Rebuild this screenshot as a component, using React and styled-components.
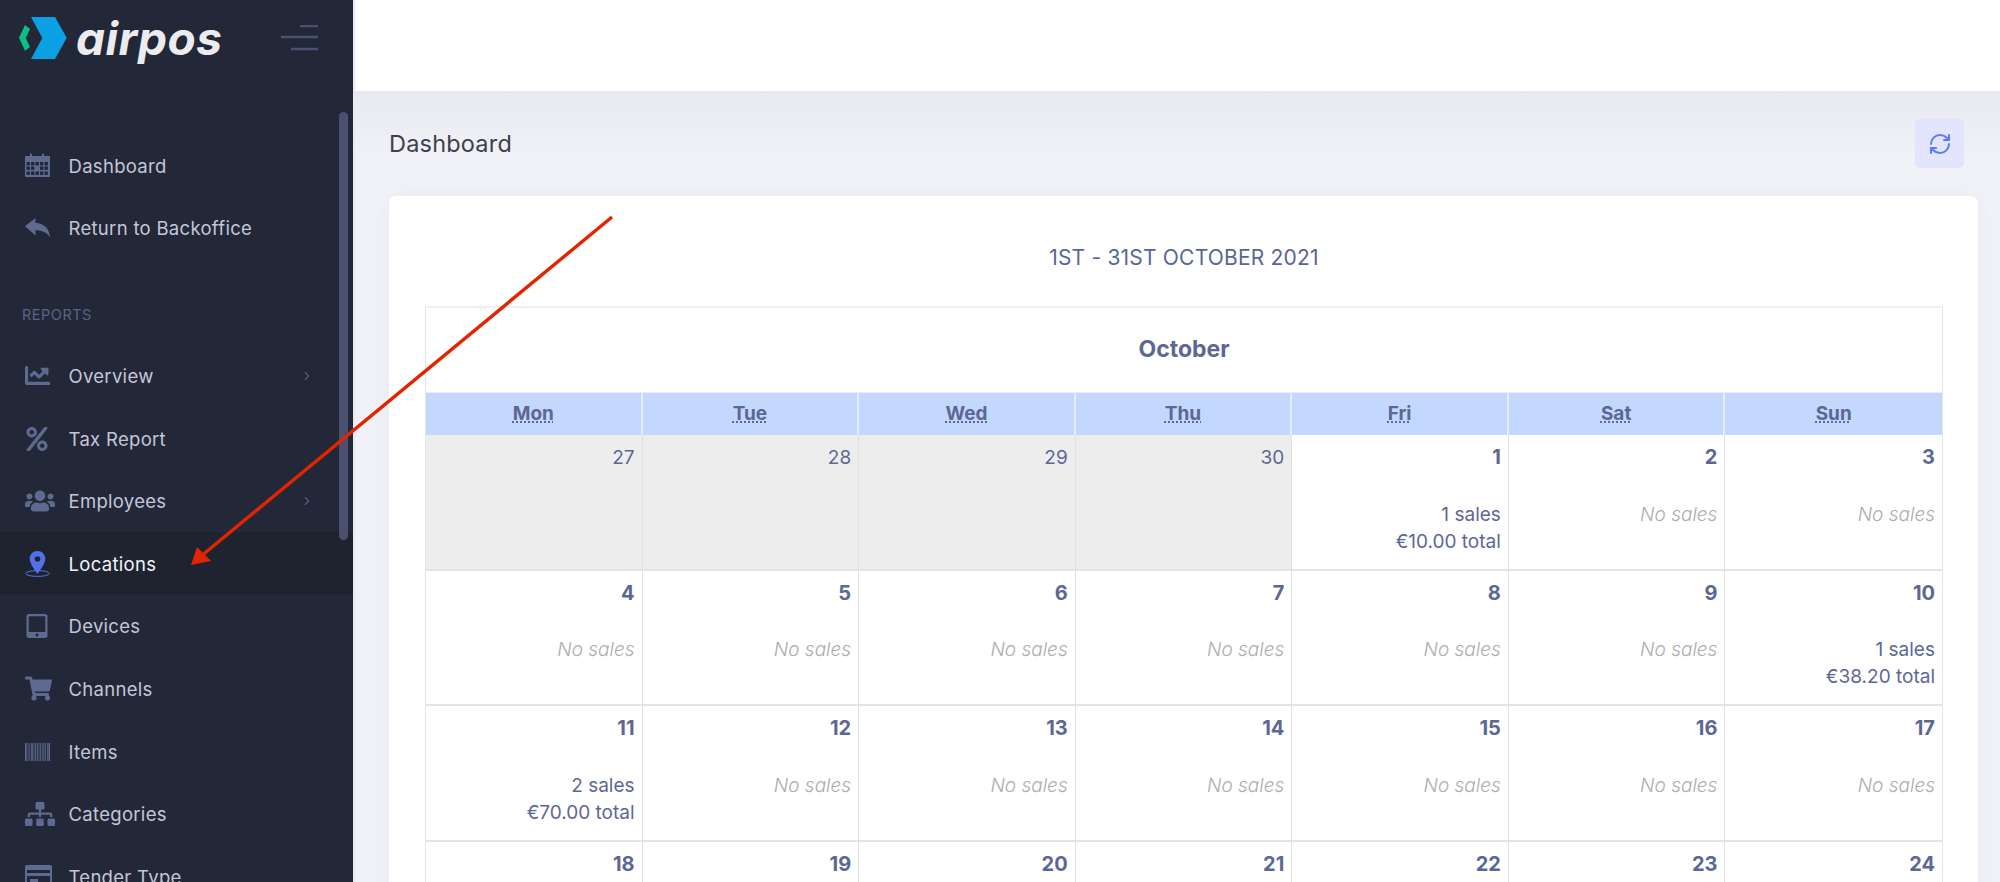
import React from "react";
import styled, { createGlobalStyle } from "styled-components";
import { FaChartLine, FaPercent, FaUsers, FaTabletAlt, FaShoppingCart, FaSitemap } from "react-icons/fa";
import { ChevronRight, RefreshCw } from "lucide-react";

const FONT = `Inter, "Noto Sans", "Liberation Sans", sans-serif`;

const Global = createGlobalStyle`
  html, body { margin: 0; padding: 0; height: 100%; overflow: hidden; background: #f0f1f7; }
  * { box-sizing: border-box; }
  body { font-family: ${FONT}; }
`;

const Page = styled.div`
  display: flex;
  height: 882px;
  overflow: hidden;
  position: relative;
`;

const Sidebar = styled.aside`
  width: 355px;
  flex: none;
  height: 100%;
  background: #232838;
  border-right: 2px solid #e9eaf1;
  position: relative;
  overflow: hidden;
`;

const Brand = styled.div`
  height: 91px;
  display: flex;
  align-items: flex-start;
  padding: 17px 35px 0 19px;
  justify-content: space-between;
`;

const LogoWrap = styled.div`
  display: flex;
  align-items: center;
  height: 42px;
  gap: 9px;
`;

const LogoText = styled.span`
  font-size: 46px;
  line-height: 42px;
  font-weight: 700;
  font-style: italic;
  color: #ececee;
  letter-spacing: 0.5px;
  font-family: ${FONT};
`;

const Burger = styled.svg`
  width: 37px;
  height: 26px;
  margin-top: 8px;
`;

const Menu = styled.nav`
  padding-top: 43.5px;
`;

const Item = styled.div`
  height: 62.6px;
  display: flex;
  align-items: center;
  padding: 0 39px 0 25px;
  background: ${(p) => (p.$active ? "#1f2330" : "transparent")};
  color: ${(p) => (p.$active ? "#f2f3f8" : "#c3c6d8")};
  font-size: 18.5px;
  letter-spacing: 0.3px;
`;

const IconBox = styled.span`
  width: 43.5px;
  flex: none;
  display: flex;
  align-items: center;
  color: #5e6a8f;
`;

const Label = styled.span`
  flex: 1;
`;

const SectionLabel = styled.div`
  height: 85px;
  padding: 47px 0 0 22px;
  font-size: 14.5px;
  line-height: 16px;
  color: #5a6384;
  letter-spacing: 0.5px;
`;

const Scroll = styled.div`
  position: absolute;
  left: 339px;
  top: 112px;
  width: 9px;
  height: 428px;
  border-radius: 5px;
  background: #4a5070;
`;

const Main = styled.main`
  flex: 1;
  min-width: 0;
  display: flex;
  flex-direction: column;
  height: 100%;
`;

const TopBar = styled.header`
  height: 91px;
  flex: none;
  background: #fff;
`;

const Content = styled.div`
  flex: 1;
  min-height: 0;
  padding: 0 22px 0 34px;
  overflow: hidden;
  background: linear-gradient(#e9eaef 0, #f1f2f8 72px);
`;

const SubHeader = styled.div`
  height: 105px;
  display: flex;
  align-items: flex-start;
  justify-content: space-between;
  padding: 28px 14px 0 0;
`;

const PageTitle = styled.h1`
  margin: 0;
  font-size: 23.5px;
  line-height: 49px;
  font-weight: 400;
  color: #3f4048;
  height: 49px;
  letter-spacing: 0.2px;
`;

const RefreshButton = styled.button`
  width: 49px;
  height: 49px;
  border: 0;
  border-radius: 5px;
  background: #e2e5fb;
  color: #5d7bf7;
  padding: 0;
  display: flex;
  align-items: center;
  justify-content: center;
`;

const Card = styled.section`
  background: #fff;
  border-radius: 7px 7px 0 0;
  padding: 0 35px 40px 36px;
  box-shadow: 0 0 20px rgba(82, 63, 105, 0.04);
`;

const RangeTitle = styled.div`
  height: 110px;
  display: flex;
  align-items: center;
  justify-content: center;
  padding-top: 13px;
  font-size: 21px;
  color: #5a6594;
  letter-spacing: 0.2px;
`;

const Calendar = styled.div`
  border-top: 2px solid #eef0f6;
  border-left: 1px solid #e4e4e4;
  border-right: 1px solid #e4e4e4;
`;

const Month = styled.div`
  height: 84px;
  display: flex;
  align-items: center;
  justify-content: center;
  font-size: 23px;
  font-weight: 700;
  color: #5d6796;
  padding-bottom: 2px;
`;

const Grid = styled.div`
  display: grid;
  grid-template-columns: repeat(7, 1fr);
`;

const Weekday = styled.div`
  height: 43px;
  background: #c4d7fd;
  border-right: 2px solid #e6edfd;
  border-top: 1px solid #e6edfd;
  display: flex;
  align-items: center;
  justify-content: center;
  padding-bottom: 2px;
  &:nth-child(7) { border-right: 0; }
`;

const Abbr = styled.abbr`
  font-size: 19px;
  font-weight: 700;
  color: #5d6796;
  text-decoration: underline dotted #5d6796;
  text-underline-offset: 2px;
`;

const Cell = styled.div`
  height: 135.5px;
  border-right: 1px solid #e0e0e0;
  border-bottom: 2px solid #e4e4e4;
  background: ${(p) => (p.$muted ? "#ededed" : "#fff")};
  padding: 0 7px 0 0;
  text-align: right;
  &:nth-child(7n) { border-right: 0; }
`;

const DayNumber = styled.div`
  height: 44px;
  line-height: 45px;
  font-size: ${(p) => (p.$muted ? "19px" : "20px")};
  font-weight: ${(p) => (p.$muted ? 400 : 700)};
  color: #5d6796;
`;

const Sales = styled.div`
  margin-top: 21.5px;
  font-size: 19px;
  line-height: 27px;
  color: #5d6796;
`;

const NoSales = styled.div`
  margin-top: 21.5px;
  font-size: 19px;
  line-height: 27px;
  font-style: italic;
  font-weight: 300;
  color: #adadad;
`;

const ArrowLayer = styled.svg`
  position: absolute;
  inset: 0;
  width: 2000px;
  height: 882px;
  pointer-events: none;
`;

const Logo = () => (
  <svg width="48" height="42" viewBox="19 17 48 42">
    <path d="M31 17H55L66.7 37.7 55 59H31L42.3 38Z" fill="#0ba0e3" />
    <path d="M25 25L19 37.7 25 50.7 30 47 25.7 38 30 29Z" fill="#0cbf85" />
  </svg>
);

const CalendarIcon = ({ color = "#5e6a8f" }) => (
  <svg width="25" height="25" viewBox="0 0 25 25">
    <path fillRule="evenodd" fill={color} d="M1 3H5V1.5a1 1 0 0 1 2 0V3H17V1.5a1 1 0 0 1 2 0V3H24a1 1 0 0 1 1 1V23a1 1 0 0 1-1 1H1a1 1 0 0 1-1-1V4a1 1 0 0 1 1-1Z" />
    {[9, 13.5, 18.5].flatMap((y) =>
      [1.5, 6, 10.5, 15, 19.5].map((x) =>
        x === 10.5 && y === 13.5 ? null : <rect key={`${x}-${y}`} x={x} y={y} width="3.4" height="3.4" fill="#232838" />
      )
    )}
  </svg>
);

const ReplyIcon = () => (
  <svg width="25" height="20" viewBox="0 0 25 20">
    <path fill="#5e6a8f" d="M0 8.2L10.5 0V5C18.5 5.2 24.5 10 25 19.5 22 14.5 17 12.2 10.5 12.2V17.5Z" />
  </svg>
);

const PinIcon = () => (
  <svg width="25" height="26" viewBox="0 0 25 26">
    <ellipse cx="12.5" cy="22.5" rx="11.8" ry="2.9" fill="none" stroke="#5470e8" strokeWidth="1" />
    <path fillRule="evenodd" fill="#5470e8" d="M12.5 0C17 0 20.3 3.4 20.3 7.8 20.3 12.4 15.5 18.8 12.5 23 9.5 18.8 4.7 12.4 4.7 7.8 4.7 3.4 8 0 12.5 0ZM12.5 5.2a2.8 2.8 0 1 0 0 5.6 2.8 2.8 0 0 0 0-5.6Z" />
  </svg>
);

const BarcodeIcon = () => (
  <svg width="25" height="18" viewBox="0 0 25 18">
    {[[0,1.6],[2.6,.8],[4.4,.8],[6.2,1.6],[8.6,.8],[10.2,1],[12,.8],[13.6,.8],[15.2,.8],[16.8,.8],[18.4,1],[20.2,.8],[22,.8],[23.4,1.6]].map(([x, w]) => (
      <rect key={x} x={x} y="0" width={w} height="18" fill="#5e6a8f" />
    ))}
  </svg>
);

const TenderIcon = () => (
  <svg width="27" height="24" viewBox="0 0 27 24">
    <path fillRule="evenodd" fill="#5e6a8f" d="M2 0H25a2 2 0 0 1 2 2V22a2 2 0 0 1-2 2H2a2 2 0 0 1-2-2V2a2 2 0 0 1 2-2ZM2 5V8H25V5ZM2 11V22H25V11Z" />
    <rect x="5" y="14" width="8" height="3" fill="#5e6a8f" />
  </svg>
);

const items = [
  { t: "Overview", i: <FaChartLine size={25} />, c: 1 },
  { t: "Tax Report", i: <FaPercent size={24} /> },
  { t: "Employees", i: <FaUsers size={30} />, c: 1 },
  { t: "Locations", i: <PinIcon />, a: 1 },
  { t: "Devices", i: <FaTabletAlt size={24} /> },
  { t: "Channels", i: <FaShoppingCart size={27} /> },
  { t: "Items", i: <BarcodeIcon /> },
  { t: "Categories", i: <FaSitemap size={30} /> },
  { t: "Tender Type", i: <TenderIcon /> },
];

const sales = { 1: ["1 sales", "€10.00 total"], 10: ["1 sales", "€38.20 total"], 11: ["2 sales", "€70.00 total"] };
const days = ["Mon", "Tue", "Wed", "Thu", "Fri", "Sat", "Sun"];
const LAST_VISIBLE_DAY = 24;
const LAST_ROW_START = 18;

export default function App() {
  return (
    <Page>
      <Global />
      <Sidebar>
        <Brand>
          <LogoWrap>
            <Logo />
            <LogoText>airpos</LogoText>
          </LogoWrap>
          <Burger viewBox="0 0 37 26">
            <path d="M19 1H37M0 12H37M10 24H37" stroke="#4a5070" strokeWidth="2.4" />
          </Burger>
        </Brand>
        <Menu>
          <Item><IconBox><CalendarIcon /></IconBox><Label>Dashboard</Label></Item>
          <Item><IconBox><ReplyIcon /></IconBox><Label>Return to Backoffice</Label></Item>
          <SectionLabel>REPORTS</SectionLabel>
          {items.map((it) => (
            <Item key={it.t} $active={it.a}>
              <IconBox>{it.i}</IconBox>
              <Label>{it.t}</Label>
              {it.c && <ChevronRight size={14} color="#545d82" />}
            </Item>
          ))}
        </Menu>
        <Scroll />
      </Sidebar>
      <Main>
        <TopBar />
        <Content>
          <SubHeader>
            <PageTitle>Dashboard</PageTitle>
            <RefreshButton aria-label="Refresh"><RefreshCw size={24} strokeWidth={2} /></RefreshButton>
          </SubHeader>
          <Card>
            <RangeTitle>1ST - 31ST OCTOBER 2021</RangeTitle>
            <Calendar>
              <Month>October</Month>
              <Grid>
                {days.map((d) => <Weekday key={d}><Abbr title={d}>{d}</Abbr></Weekday>)}
              </Grid>
              <Grid>
                {[27, 28, 29, 30].map((d) => (
                  <Cell key={d} $muted><DayNumber $muted>{d}</DayNumber></Cell>
                ))}
                {Array.from({ length: LAST_VISIBLE_DAY }, (_, k) => k + 1).map((d) => (
                  <Cell key={d}>
                    <DayNumber>{d}</DayNumber>
                    {d < LAST_ROW_START && (sales[d]
                      ? <Sales>{sales[d][0]}<br />{sales[d][1]}</Sales>
                      : <NoSales>No sales</NoSales>)}
                  </Cell>
                ))}
              </Grid>
            </Calendar>
          </Card>
        </Content>
      </Main>
      <ArrowLayer viewBox="0 0 2000 882">
        <path d="M612 217L200 557" stroke="#e32400" strokeWidth="3.4" fill="none" />
        <path d="M191 565L197 547 211 561Z" fill="#e32400" />
      </ArrowLayer>
    </Page>
  );
}
